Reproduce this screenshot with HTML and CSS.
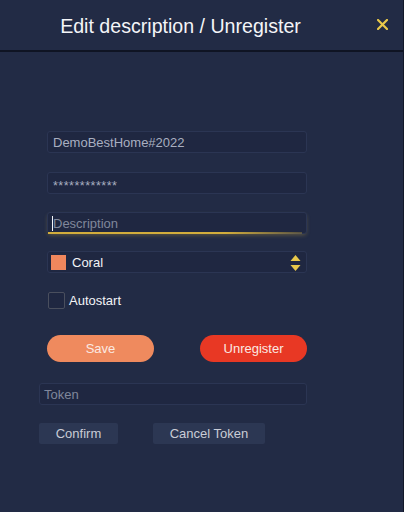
FILE: index.html
```html
<!DOCTYPE html>
<html>
<head>
<meta charset="utf-8">
<link rel="stylesheet" href="styles.css">
</head>
<body>
<div class="page">
  <header class="header">
    <h1 class="title">Edit description / Unregister</h1>
    <span class="close">
      <svg width="11" height="11" viewBox="0 0 11 11"><path d="M1 1 L10 10 M10 1 L1 10" stroke="#e8c84a" stroke-width="2.2" stroke-linecap="square"/></svg>
    </span>
  </header>
  <main class="form">
    <div class="field"><span class="value">DemoBestHome#2022</span></div>
    <div class="field gap first-gap"><span class="value stars">************</span></div>
    <div class="field gap focused"><span class="caret"></span><span class="placeholder">Description</span></div>
    <div class="field gap select">
      <span class="swatch"></span>
      <span class="sel-text">Coral</span>
      <svg class="arrows" width="11" height="18" viewBox="0 0 11 18"><path d="M5.5 1 L10.5 7 L0.5 7 Z" fill="#e8c84a"/><path d="M0.5 11 L10.5 11 L5.5 17 Z" fill="#e8c84a"/></svg>
    </div>
    <label class="check-row">
      <span class="checkbox"></span>
      <span class="check-label">Autostart</span>
    </label>
    <div class="btn-row">
      <button class="btn save">Save</button>
      <button class="btn unregister">Unregister</button>
    </div>
    <div class="token-block">
      <div class="field token"><span class="placeholder">Token</span></div>
      <div class="small-row">
        <button class="sbtn confirm">Confirm</button>
        <button class="sbtn cancel">Cancel Token</button>
      </div>
    </div>
  </main>
</div>
</body>
</html>
```

FILE: styles.css
```css
html, body {
  margin: 0;
  padding: 0;
  background: #222b45;
}
body {
  font-family: "Liberation Sans", Arial, sans-serif;
}
.page {
  width: 403px;
  height: 512px;
  border-right: 1px solid #121829;
  box-sizing: content-box;
  display: flex;
  flex-direction: column;
}
.header {
  height: 50px;
  border-bottom: 2px solid #0f1423;
  display: flex;
  align-items: center;
  justify-content: center;
  position: relative;
}
.title {
  margin: 0;
  font-weight: normal;
  font-size: 19.6px;
  color: #f4f5f8;
  margin-left: -42px;
  margin-top: 3px;
}
.close {
  position: absolute;
  right: 15px;
  top: 19px;
  display: flex;
}
.form {
  padding: 79px 0 0 47px;
  display: flex;
  flex-direction: column;
  width: 260px;
}
.field {
  height: 22px;
  box-sizing: border-box;
  border: 1px solid #2b3553;
  border-radius: 3px;
  background: #1f2741;
  display: flex;
  align-items: center;
  padding-left: 5px;
  font-size: 13px;
}
.gap { margin-top: 18px; }
.first-gap { margin-top: 19px; }
.value { color: #a9afc0; }
.stars { font-size: 12.5px; letter-spacing: 0.5px; margin-top: 5px; }
.placeholder { color: #80879b; }
.focused {
  position: relative;
  box-shadow: 0 2px 4px -1px rgba(210, 175, 60, 0.35);
}
.focused::after {
  content: "";
  position: absolute;
  left: 0;
  right: 4px;
  bottom: -1px;
  height: 2px;
  background: linear-gradient(90deg, #d2ad3c 0%, #d2ad3c 70%, rgba(210, 173, 60, 0.3) 100%);
}
.caret {
  width: 1px;
  height: 15px;
  background: #f4f5f8;
  margin-left: -1px;
}
.select {
  padding-left: 3px;
  padding-right: 5px;
  margin-top: 17px;
}
.swatch {
  width: 15px;
  height: 15px;
  background: #f0875d;
}
.sel-text {
  color: #f2f3f6;
  margin-left: 6px;
  flex: 1;
}
.arrows { margin-top: 1px; }
.check-row {
  margin-top: 19px;
  display: flex;
  align-items: center;
  height: 17px;
}
.checkbox {
  width: 15px;
  height: 15px;
  border: 1px solid #4a4f5e;
  border-radius: 2px;
  background: #1f2741;
  margin-left: 1px;
}
.check-label {
  margin-left: 4px;
  color: #f2f3f6;
  font-size: 13px;
}
.btn-row {
  margin-top: 26px;
  display: flex;
  justify-content: space-between;
}
.btn {
  width: 107px;
  height: 27px;
  border: none;
  border-radius: 14px;
  font-family: "Liberation Sans", Arial, sans-serif;
  font-size: 13px;
  color: #fbe9e2;
  padding: 0;
}
.save { background: #ef8a5e; }
.unregister { background: #e83824; }
.token-block {
  margin-left: -8px;
  width: 268px;
  margin-top: 21px;
}
.token {
  padding-left: 4px;
}
.small-row {
  margin-top: 18px;
  display: flex;
}
.sbtn {
  height: 21px;
  border: none;
  border-radius: 2px;
  background: #2c3753;
  color: #c9ccd6;
  font-family: "Liberation Sans", Arial, sans-serif;
  font-size: 13px;
  padding: 0;
}
.confirm { width: 79px; }
.cancel { width: 112px; margin-left: 35px; }
```
